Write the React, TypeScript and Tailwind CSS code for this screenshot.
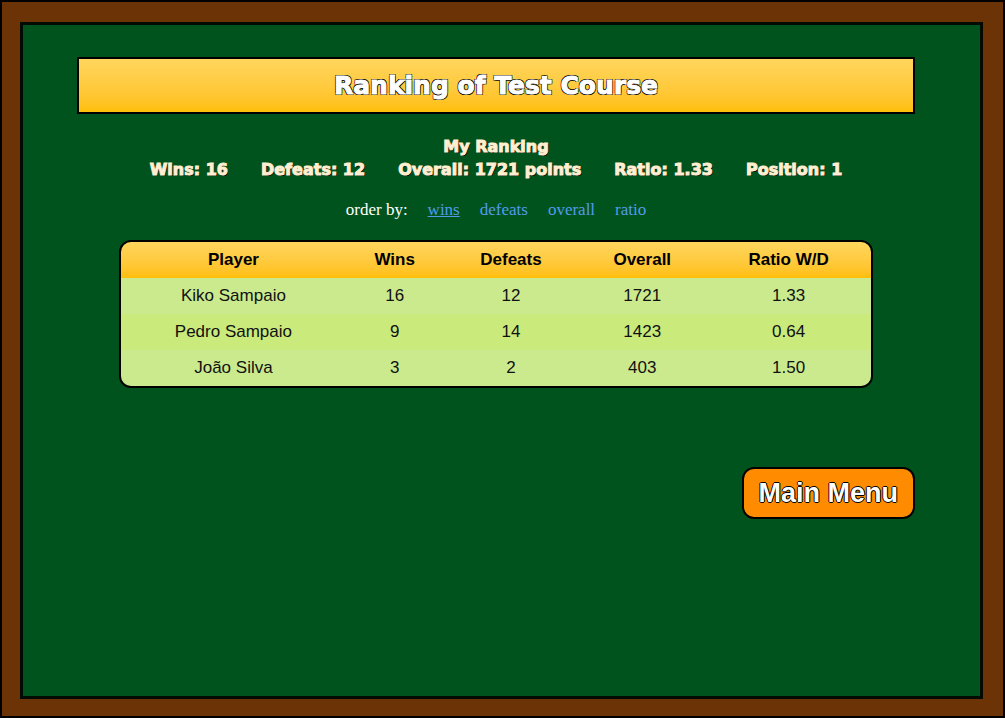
const stats = ["Wins: 16", "Defeats: 12", "Overall: 1721 points", "Ratio: 1.33", "Position: 1"];

const orders = ["wins", "defeats", "overall", "ratio"];

const columns = [
  { label: "Player", width: "w-[30%]" },
  { label: "Wins", width: "w-[13%]" },
  { label: "Defeats", width: "w-[18%]" },
  { label: "Overall", width: "w-[17%]" },
  { label: "Ratio W/D", width: "w-[22%]" },
];

const players = [
  ["Kiko Sampaio", "16", "12", "1721", "1.33"],
  ["Pedro Sampaio", "9", "14", "1423", "0.64"],
  ["João Silva", "3", "2", "403", "1.50"],
];

export default function App() {
  return (
    <div className="flex min-h-screen border-2 border-black bg-[#6c3306] pt-5 pr-5 pb-[17px] pl-[18px]">
      <main className="flex grow flex-col border-[3px] border-[#020a02] bg-[#01531d] pt-8 pr-[65px] pb-8 pl-[54px]">
        <h1 className="border-2 border-black bg-linear-to-b from-[#ffd65c] to-[#ffbf05] text-center font-['DejaVu_Sans',sans-serif] text-[25px] leading-[53px] font-bold text-white [-webkit-text-stroke:1px_#fff] [text-shadow:-1px_-1px_0_#000,1px_-1px_0_#000,-1px_1px_0_#000,1px_1px_0_#000]">
          Ranking of Test Course
        </h1>

        <section className="mt-[21px] text-center font-['DejaVu_Sans',sans-serif] text-[16px] leading-[23px] font-bold text-[#ffefd0] [-webkit-text-stroke:1px_#ffefd0] [text-shadow:1px_1px_0_#000]">
          <h2>My Ranking</h2>
          <ul className="flex flex-wrap justify-center gap-x-[33px]">
            {stats.map((stat) => (
              <li key={stat}>{stat}</li>
            ))}
          </ul>
        </section>

        <nav className="mt-[19px] flex justify-center gap-x-5 font-['Liberation_Serif',serif] text-[17px] leading-5 text-white">
          <span>order by:</span>
          {orders.map((order) => (
            <a
              key={order}
              href={`#${order}`}
              className={order === "wins" ? "text-[#529bea] underline" : "text-[#529bea]"}
            >
              {order}
            </a>
          ))}
        </nav>

        <div className="mx-auto mt-5 w-9/10 overflow-hidden rounded-xl border-2 border-black font-['Liberation_Sans',sans-serif] text-[17px] text-[#111]">
          <table className="w-full table-fixed text-center">
            <thead className="bg-linear-to-b from-[#ffd65c] to-[#ffbf05] text-black">
              <tr className="h-9">
                {columns.map((column) => (
                  <th key={column.label} scope="col" className={column.width}>
                    {column.label}
                  </th>
                ))}
              </tr>
            </thead>
            <tbody>
              {players.map((row) => (
                <tr key={row[0]} className="h-9 odd:bg-[#cbea8e] even:bg-[#cbea7c]">
                  {row.map((value, index) => (
                    <td key={index}>{value}</td>
                  ))}
                </tr>
              ))}
            </tbody>
          </table>
        </div>

        <button
          type="button"
          className="mt-[79px] self-end rounded-xl border-2 border-black bg-[#ff8c00] px-[15px] font-['Liberation_Sans',sans-serif] text-[27px] leading-12 font-bold text-white [text-shadow:-1px_0_0_#000,1px_0_0_#000,0_-1px_0_#000,0_1px_0_#000]"
        >
          Main Menu
        </button>
      </main>
    </div>
  );
}
